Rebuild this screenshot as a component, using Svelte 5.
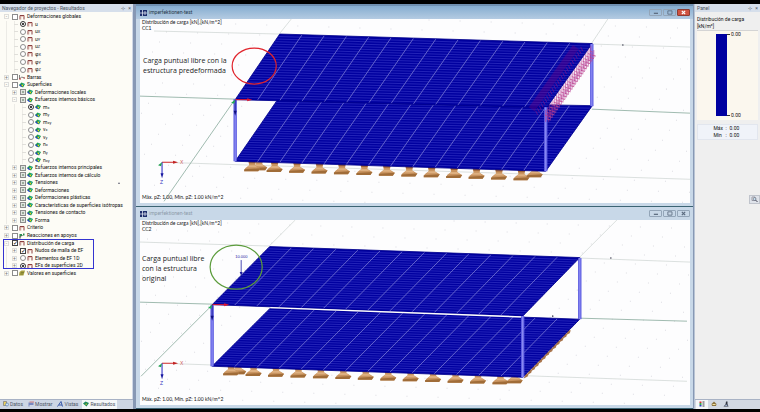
<script lang="ts">
  type Point = [number, number];
  type Quad = [Point, Point, Point, Point];

  interface Row {
    level: number;
    text: string;
    sub?: string;
    control: 'check' | 'mixed' | 'radio';
    icon: 'frame' | 'surface' | 'member' | 'support' | 'value';
    group?: string;
    on?: boolean;
    expander?: '+' | '-';
    flag?: boolean;
  }

  interface Scene {
    id: string;
    active: boolean;
    loadCase: string;
    top: Quad;
    bottom: Quad;
    step: Point;
    green: number[][];
    grey: number[][];
    columns: number[][];
    feet: number[][];
    marks: Point[];
    note: string[];
    noteAt: Point;
    ring: number[];
    ringColour: string;
  }

  const leaf = (level: number, group: string, icon: Row['icon'], text: string, sub = '', on = false): Row => ({
    level, group, icon, text, sub, on, control: 'radio',
  });
  const branch = (level: number, icon: Row['icon'], text: string, control: Row['control'] = 'check', expander: '+' | '-' = '+'): Row => ({
    level, icon, text, control, expander,
  });

  const rows: Row[] = [
    branch(0, 'frame', 'Deformaciones globales', 'check', '-'),
    leaf(1, 'global', 'frame', 'u', '', true),
    leaf(1, 'global', 'frame', 'u', 'X'),
    leaf(1, 'global', 'frame', 'u', 'Y'),
    leaf(1, 'global', 'frame', 'u', 'Z'),
    leaf(1, 'global', 'frame', 'φ', 'X'),
    leaf(1, 'global', 'frame', 'φ', 'Y'),
    leaf(1, 'global', 'frame', 'φ', 'Z'),
    branch(0, 'member', 'Barras'),
    branch(0, 'surface', 'Superficies', 'check', '-'),
    branch(1, 'surface', 'Deformaciones locales', 'mixed'),
    branch(1, 'surface', 'Esfuerzos internos básicos', 'mixed', '-'),
    leaf(2, 'forces', 'surface', 'm', 'x', true),
    leaf(2, 'forces', 'surface', 'm', 'y'),
    leaf(2, 'forces', 'surface', 'm', 'xy'),
    leaf(2, 'forces', 'surface', 'v', 'x'),
    leaf(2, 'forces', 'surface', 'v', 'y'),
    leaf(2, 'forces', 'surface', 'n', 'x'),
    leaf(2, 'forces', 'surface', 'n', 'y'),
    leaf(2, 'forces', 'surface', 'n', 'xy'),
    branch(1, 'surface', 'Esfuerzos internos principales', 'mixed'),
    branch(1, 'surface', 'Esfuerzos internos de cálculo', 'mixed'),
    { ...branch(1, 'surface', 'Tensiones', 'mixed'), flag: true },
    branch(1, 'surface', 'Deformaciones', 'mixed'),
    branch(1, 'surface', 'Deformaciones plásticas', 'mixed'),
    branch(1, 'surface', 'Características de superficies isótropas', 'mixed'),
    branch(1, 'surface', 'Tensiones de contacto', 'mixed'),
    branch(1, 'surface', 'Forma', 'mixed'),
    branch(0, 'frame', 'Criterio'),
    branch(0, 'support', 'Reacciones en apoyos'),
    { ...branch(0, 'frame', 'Distribución de carga', 'check', '-'), on: true },
    { ...branch(1, 'frame', 'Nudos de malla de EF'), on: true },
    { ...branch(1, 'frame', 'Elementos de EF 1D', 'radio'), group: 'load' },
    { ...branch(1, 'frame', 'EFs de superficies 2D', 'radio'), group: 'load', on: true },
    branch(0, 'value', 'Valores en superficies'),
  ];

  // evenly spaced supports under the front edge
  const supports = (x: number, y: number, count: number) =>
    Array.from({ length: count }, (_, i) => [x + i * 22.4, y + i * 0.75]);

  const scenes: Scene[] = [
    {
      id: 'cc1',
      active: true,
      loadCase: 'CC1',
      top: [[139.5, 15], [451.5, 24.5], [406, 88.5], [95, 80.5]],
      bottom: [[137, 81], [451.5, 86.5], [405, 152], [95, 142]],
      step: [7, -10],
      green: [[0, 77, 95, 80], [24, 182, 95, 80], [451, 90, 549, 94]],
      grey: [[14, 12, 139, 15], [139, 15, 151, 0], [451, 25, 549, 28], [451, 24, 467, 0], [22, 143, 549, 160]],
      columns: [[95, 80, 142], [405, 88, 152], [451, 25, 87]],
      feet: [[119, 143], ...supports(112, 144, 13), [394, 150]],
      marks: [[482, 26]],
      note: ['Carga puntual libre con la', 'estructura predeformada'],
      noteAt: [3, 44],
      ring: [114, 47, 22, 18],
      ringColour: '#e0242c',
    },
    {
      id: 'cc2',
      active: false,
      loadCase: 'CC2',
      top: [[129.5, 26.5], [439, 37.5], [382, 96], [72, 84.5]],
      bottom: [[130, 88], [439, 99], [382, 157], [72, 146]],
      step: [9, -9],
      green: [[0, 82, 72, 84], [1, 156, 72, 85], [439, 98, 546, 101]],
      grey: [[0, 22, 129, 26], [129, 26, 155, 0], [439, 38, 549, 42], [439, 37, 476, 0], [22, 143, 546, 161]],
      columns: [[72, 85, 146], [382, 96, 157], [439, 38, 99]],
      feet: [[98, 146], ...supports(91, 147, 13), [374, 155]],
      marks: [[470, 38], [412, 96]],
      note: ['Carga puntual libre', 'con la estructura', 'original'],
      noteAt: [2, 41],
      ring: [96, 47, 26, 22],
      ringColour: '#5c9c3c',
    },
  ];

  const mix = (a: Point, b: Point, t: number): Point => [a[0] + (b[0] - a[0]) * t, a[1] + (b[1] - a[1]) * t];

  // mesh lines running along the slab (long) or across it
  function mesh([a, b, c, d]: Quad, count: number, long: boolean) {
    let path = '';
    for (let i = 1; i < count; i++) {
      const t = i / count;
      const p = long ? mix(a, d, t) : mix(a, b, t);
      const q = long ? mix(b, c, t) : mix(d, c, t);
      path += `M${p[0].toFixed(1)} ${p[1].toFixed(1)}L${q[0].toFixed(1)} ${q[1].toFixed(1)}`;
    }
    return path;
  }

  function groundDots([dx, dy]: Point) {
    let path = '';
    for (let i = -8; i < 20; i++) {
      for (let j = -2; j < 22; j++) {
        const x = i * 31 + j * dx;
        const y = 186 + j * dy + i;
        if (x > 0 && x < 549 && y > 0 && y < 184) path += `M${x} ${y}h1`;
      }
    }
    return path;
  }

  const loads = Array.from({ length: 26 }, (_, i) => [451 - i * 1.8, 27 + i * 2.55]);
  const rim = Array.from({ length: 13 }, (_, i) => [427 - i * 3.5, 110 + i * 3.6]);

  const tabs = ['Datos', 'Mostrar', 'Vistas', 'Resultados'];
  let activeTab = $state('Resultados');
</script>

{#snippet glyph(name: string)}
  <svg class="glyph" viewBox="0 0 12 12" aria-hidden="true">
    {#if name === 'frame'}
      <path d="M2 11V3H10V11" fill="none" stroke="#8c4040" stroke-width="2" />
      <path d="M4 11V5H11" fill="none" stroke="#d8a090" />
    {:else if name === 'surface'}
      <path d="M0 6L5 1L12 4L8 11Z" fill="#1d9a4c" />
      <path d="M0 6L4 5L6 10L4 10Z" fill="#2444c4" />
      <path d="M4 6L8 5L8 9Z" fill="#f0d020" />
      <path d="M6 3L11 4L9 6Z" fill="#30b8c0" />
    {:else if name === 'member'}
      <path d="M1 2V10L5 6L11 8" fill="none" stroke="#555" stroke-width="1.5" />
      <path d="M0 10H4M9 8H12" stroke="#c04040" stroke-width="2" />
    {:else if name === 'support'}
      <path d="M2 11V6L7 5" fill="none" stroke="#333" stroke-width="2" />
      <path d="M1 2H6V6H1ZM8 1H11V5H8Z" fill="#2d8a4c" />
    {:else}
      <path d="M1 4L5 1H12L9 11H0Z" fill="#a8a040" />
      <path d="M3 8H8M4 5H10" stroke="#5c6428" />
    {/if}
  </svg>
{/snippet}

<div class="app">
  <div class="workspace">
    <aside class="navigator">
      <header class="panel-title">
        <span>Navegador de proyectos - Resultados</span>
        <button aria-label="Fijar">⊹</button>
        <button aria-label="Cerrar">×</button>
      </header>

      <div class="tree-area">
        <ul class="tree">
          {#each rows as row, i}
            <li class="row">
              {#each { length: row.level } as _}
                <span class="guide"></span>
              {/each}
              {#if row.expander}
                <button class="expander" aria-label="Expandir {row.text}"><span>{row.expander}</span></button>
              {:else}
                <span class="guide branch"></span>
              {/if}
              <input
                id="row-{i}"
                type={row.control === 'radio' ? 'radio' : 'checkbox'}
                name={row.group}
                class:mixed={row.control === 'mixed'}
                checked={row.on}
              />
              <label for="row-{i}">
                {@render glyph(row.icon)}
                <span>{row.text}{#if row.sub}<small>{row.sub}</small>{/if}</span>
              </label>
              {#if row.flag}
                <svg class="flag" viewBox="0 0 4 4" aria-hidden="true"><path d="M1 3H3L2 1Z" fill="#667" /></svg>
              {/if}
            </li>
          {/each}
          <li class="highlight" aria-hidden="true"></li>
        </ul>
      </div>

      <nav class="tabs">
        {#each tabs as tab, i}
          <button class:active={activeTab === tab} onclick={() => activeTab = tab}>
            <svg class="glyph" viewBox="0 0 12 12" aria-hidden="true">
              {#if i === 0}
                <path d="M1 1H7V9H1Z" fill="#e8d060" stroke="#556" />
                <circle cx="8" cy="7" r="3" fill="#cfe4f8" stroke="#3560a0" />
              {:else if i === 1}
                <path d="M1 3H11V8H3V11H1Z" fill="#7888c0" />
                <path d="M3 2H12" stroke="#d08080" stroke-width="2" />
              {:else if i === 2}
                <path d="M1 11L8 1L11 11M4 8H10" fill="none" stroke="#3858a8" stroke-width="2" />
              {:else}
                <path d="M0 5L5 1L12 4L7 11Z" fill="#1d8a5c" />
                <path d="M4 6L8 5L7 8Z" fill="#f0d020" />
              {/if}
            </svg>
            {tab}
          </button>
        {/each}
      </nav>
    </aside>

    <main class="mdi">
      {#each scenes as scene (scene.id)}
        <section class="window" class:active={scene.active}>
          <header class="window-title">
            <svg class="app-icon" viewBox="0 0 14 12" aria-hidden="true">
              <path d="M0 0H14V12H0Z" fill="#1d2e6c" />
              <path d="M0 6H14M5 0V12M10 2V10" stroke="#e8eef8" stroke-width="1.5" />
            </svg>
            <h2>imperfektionen-test</h2>
            <button aria-label="Minimizar">
              <svg viewBox="0 0 12 6"><path d="M4 4H9" stroke="currentColor" stroke-width="1.5" /></svg>
            </button>
            <button aria-label="Maximizar">
              <svg viewBox="0 0 12 6"><path d="M4 1H9V5H4Z" fill="none" stroke="currentColor" /></svg>
            </button>
            <button class="close" aria-label="Cerrar ventana">
              <svg viewBox="0 0 12 6"><path d="M4 1L8 5M8 1L4 5" stroke="currentColor" stroke-width="1.5" /></svg>
            </button>
          </header>

          <div class="canvas">
            <svg class="scene" viewBox="0 0 549 184" preserveAspectRatio="xMinYMin meet">
              <path d={groundDots(scene.step)} stroke="#dcdce2" />
              {#each scene.grey as [x1, y1, x2, y2]}
                <line {x1} {y1} {x2} {y2} stroke="#c4ccca" stroke-width="0.6" />
              {/each}
              {#each scene.green as [x1, y1, x2, y2]}
                <line {x1} {y1} {x2} {y2} stroke="#88aa9c" stroke-width="0.8" />
              {/each}

              {#each scene.feet as [x, y]}
                <g transform="translate({x} {y})">
                  <path d="M-4 -3H4L3 2L8 5L6 8H-8L-7 5L-3 2Z" fill="#c99460" />
                  <path d="M-4 -3H4L3 0H-3Z" fill="#9a6038" />
                  <path d="M-8 6L8 5L6 8H-8Z" fill="#a06c38" />
                  <path d="M-3 2L3 2L5 4H-5Z" fill="#deb080" />
                </g>
              {/each}

              {#if !scene.active}
                {#each rim as [x, y]}
                  <path d="M{x} {y}l3 0l-1 3l-4 2z" fill="#a8744c" />
                {/each}
              {/if}

              {#each [scene.bottom, scene.top] as quad}
                <polygon points={quad.join(' ')} fill="#0000a0" />
                <path d={mesh(quad, 26, true)} stroke="#2c2cbe" stroke-width="0.8" />
                <path d={mesh(quad, 14, false)} stroke="#7878d4" stroke-width="0.8" />
                <polygon points={quad.join(' ')} fill="none" stroke="#00008c" stroke-width="0.8" />
              {/each}
              {#if !scene.active}
                <path d="M130 87.5L382 96.8" stroke="#fff" stroke-width="1.4" />
              {/if}

              {#each scene.columns as [x, y1, y2]}
                <line x1={x} x2={x} {y1} {y2} stroke="#5c5ce0" stroke-width="3.4" />
                <line x1={x} x2={x} {y1} {y2} stroke="#8c8cf4" stroke-width="1.2" />
              {/each}

              {#if scene.active}
                <path d="M435 28L391 90" stroke="#7c007c" stroke-width="7" opacity="0.35" />
                {#each loads as [x, y]}
                  <path d="M{x - 1} {y}v12M{x + 2} {y + 4}v8" stroke="#b03090" stroke-width="0.6" />
                  <path d="M{x - 2} {y + 5}l3 1M{x} {y + 9}l4 1" stroke="#c04890" stroke-width="0.8" />
                  <path d="M{x - 11} {y + 1}l2 4" stroke="#6c1090" stroke-width="0.8" />
                {/each}
              {:else}
                <text class="load" x="95" y="38">10.000</text>
                <path d="M101 40V53" stroke="#2020a0" stroke-width="0.8" />
                <path d="M99.5 52H102.5L101 56Z" fill="#2020a0" />
              {/if}

              <g transform="translate({scene.top[3][0]} {scene.top[3][1]})">
                <path d="M0 0H14" stroke="#e01830" />
                <path d="M12 -1.5L17 0L12 1.5Z" fill="#e01830" />
                <path d="M0 0V12" stroke="#1818a0" />
                <path d="M-1.5 11H1.5L0 16Z" fill="#101080" />
                <path d="M-4 3L0 0L-1 4Z" fill="#20b050" />
              </g>
              <g transform="translate(22 143)">
                <path d="M0 0H12" stroke="#d83030" />
                <path d="M11 -1.5L16 0L11 1.5Z" fill="#c02020" />
                <path d="M0 0V12" stroke="#2020c0" />
                <path d="M-1.5 11H1.5L0 16Z" fill="#1818a0" />
                <path d="M-4 3L0 0L-1 4Z" fill="#20a050" />
                <text class="axis-x" x="18" y="2">X</text>
                <text class="axis-z" x="-2" y="22">Z</text>
              </g>
              {#each scene.marks as [cx, cy]}
                <circle {cx} {cy} r="0.8" fill="#445" />
              {/each}

              <ellipse
                cx={scene.ring[0]}
                cy={scene.ring[1]}
                rx={scene.ring[2]}
                ry={scene.ring[3]}
                fill="none"
                stroke={scene.ringColour}
                stroke-width="1.2"
              />
              <text class="note">
                {#each scene.note as line, i}
                  <tspan x={scene.noteAt[0]} y={scene.noteAt[1] + i * 10}>{line}</tspan>
                {/each}
              </text>
            </svg>
            <p class="caption">Distribución de carga [kN],[kN/m^2]<br />{scene.loadCase}</p>
            <p class="extremes">Máx. pZ: 1.00, Mín. pZ: 1.00 kN/m^2</p>
          </div>
        </section>
      {/each}
    </main>

    <aside class="legend">
      <header class="panel-title">
        <span>Panel</span>
        <button aria-label="Fijar panel">⊹</button>
        <button aria-label="Cerrar panel">×</button>
      </header>
      <p class="legend-name">Distribución de carga<br />[kN/m²]</p>
      <div class="scale">
        <div class="bar"></div>
        <div class="ticks"><span>0.00</span><span>0.00</span></div>
      </div>
      <dl class="limits">
        <dt>Máx</dt><dd>:</dd><dd>0.00</dd>
        <dt>Mín</dt><dd>:</dd><dd>0.00</dd>
      </dl>
      <div class="spacer">
        <button class="zoom" aria-label="Ampliar">
          <svg viewBox="0 0 16 14">
            <path d="M3 2H9V9H3Z" fill="#fff" stroke="#556" />
            <circle cx="8" cy="6" r="3" fill="#c8e0f0" stroke="#445" />
            <path d="M10 8L14 12" stroke="#445" stroke-width="2" />
          </svg>
        </button>
      </div>
      <footer class="legend-tabs">
        <button class="active" aria-label="Escala de colores">
          <svg viewBox="0 0 12 12">
            <path d="M1 1H5V4H1Z" fill="#d83030" /><path d="M1 4H5V8H1Z" fill="#30a850" /><path d="M1 8H5V11H1Z" fill="#3040c0" />
            <path d="M7 2H11M7 6H11M7 10H11" stroke="#444" stroke-width="2" />
          </svg>
        </button>
        <button aria-label="Factores">
          <svg viewBox="0 0 12 12"><path d="M1 6L6 1L11 6L10 10H2Z" fill="#8c7440" /><path d="M3 6H9V8H3Z" fill="#f0e0a0" /></svg>
        </button>
        <button aria-label="Filtro">
          <svg viewBox="0 0 12 12"><path d="M6 1H9V6L11 11H1L5 7Z" fill="#303440" /><path d="M5 8L8 7L9 10H4Z" fill="#a0b0d0" /></svg>
        </button>
      </footer>
    </aside>
  </div>
</div>

<style>
  :global(body) {
    margin: 0;
    background: #000;
  }

  .app {
    box-sizing: border-box;
    min-height: 100vh;
    padding: 4px 0;
    display: flex;
    background: #000;
    color: #111;
    font: 5px/7px Roboto, 'Noto Sans', sans-serif;
  }

  .workspace {
    flex: 1;
    display: grid;
    grid-template-columns: 136px minmax(0, 1fr) 67px;
    background: #8798b4;
  }

  button {
    margin: 0;
    padding: 0;
    border: 0;
    background: none;
    color: inherit;
    font: inherit;
  }

  p,
  h2,
  ul,
  dl,
  dd {
    margin: 0;
    padding: 0;
  }

  .glyph {
    flex: none;
    width: 6px;
    height: 6px;
  }

  .panel-title {
    display: flex;
    align-items: center;
    gap: 3px;
    height: 8px;
    padding: 0 2px;
    background: #d6dfeb;
    color: #4c5460;
  }

  .panel-title span {
    flex: 1;
    white-space: nowrap;
  }

  .navigator {
    display: flex;
    flex-direction: column;
    margin-right: 3px;
    background: #d0d8e6;
  }

  .tree-area {
    flex: 1;
    margin-right: 1px;
    padding: 1px 0;
    background: #fdfcf6;
  }

  .tree {
    position: relative;
    display: grid;
    grid-template-rows: repeat(35, 1fr);
    min-height: 264px;
    list-style: none;
  }

  .row {
    display: flex;
    align-items: center;
    min-height: 0;
    padding-left: 3px;
    white-space: nowrap;
  }

  .guide,
  .expander {
    flex: none;
    position: relative;
    align-self: stretch;
    width: 8px;
  }

  .guide::before {
    content: '';
    position: absolute;
    top: 0;
    bottom: 0;
    left: 3px;
    border-left: 1px solid #ecebe6;
  }

  .branch::after {
    content: '';
    position: absolute;
    top: 3px;
    left: 3px;
    width: 4px;
    border-top: 1px solid #e0dfda;
  }

  .expander {
    display: flex;
    align-items: center;
  }

  .expander span {
    box-sizing: border-box;
    width: 5px;
    height: 5px;
    margin-left: 1px;
    border: 1px solid #dededc;
    color: #777;
    font-size: 5px;
    line-height: 3px;
    text-align: center;
  }

  input {
    appearance: none;
    flex: none;
    display: grid;
    place-items: center;
    box-sizing: border-box;
    width: 6px;
    height: 6px;
    margin: 0 1px;
    border: 1px solid #8c8c8c;
    background: #fff;
  }

  input[type='radio'] {
    border-radius: 50%;
  }

  input[type='radio']:checked::after {
    content: '';
    width: 2px;
    height: 2px;
    border-radius: 50%;
    background: #000;
  }

  input[type='radio']:checked {
    border-color: #333;
  }

  input[type='checkbox']:checked {
    border-color: #444;
  }

  input[type='checkbox']:checked::after {
    content: '✓';
    color: #000;
    font: bold 6px/4px 'DejaVu Sans', sans-serif;
  }

  .mixed {
    background: #9cac9c;
    box-shadow: inset 0 0 0 1px #dfe4df;
  }

  label {
    display: flex;
    align-items: center;
    gap: 2px;
  }

  small {
    font-size: 4px;
  }

  .flag {
    width: 4px;
    height: 4px;
    margin-left: auto;
    margin-right: 11px;
  }

  .highlight {
    position: absolute;
    grid-row: 31 / 35;
    top: 0;
    bottom: 0;
    left: 3px;
    width: 89px;
    border: 1px solid #3434d0;
    pointer-events: none;
  }

  .tabs {
    display: flex;
    gap: 2px;
    height: 9px;
    padding-left: 2px;
    border-top: 1px solid #a8b2c4;
    background: #cdd5e3;
    color: #4c5464;
  }

  .tabs button {
    display: flex;
    align-items: center;
    gap: 1px;
    padding: 0 2px 0 1px;
  }

  .tabs .active {
    background: #f4f6f8;
  }

  .mdi {
    display: flex;
    flex-direction: column;
    padding-top: 2px;
    background: #6f8fb0;
  }

  .window {
    flex: 1;
    display: flex;
    flex-direction: column;
    padding: 0 3px 3px 4px;
    border-bottom: 1px solid #3c6474;
    background: #c8d8e8;
  }

  .window-title {
    display: flex;
    align-items: center;
    gap: 1px;
    height: 13px;
    color: #8c9aa8;
  }

  .active .window-title {
    margin: 0 -3px 0 -4px;
    padding: 0 3px 0 4px;
    background: linear-gradient(#86add0, #b4cbe2);
    color: #283848;
  }

  .app-icon {
    width: 7px;
    height: 6px;
  }

  .window-title h2 {
    flex: 1;
    padding-left: 1px;
    font-size: 5px;
    font-weight: 400;
  }

  .window-title button {
    display: flex;
    align-items: center;
    width: 13px;
    height: 7px;
    box-sizing: border-box;
    border: 1px solid #93a5b8;
    border-radius: 1px;
    color: #5c6c80;
  }

  .window-title button svg {
    width: 100%;
    height: 5px;
  }

  .active .window-title .close {
    border-color: #8c3c34;
    background: #cf5240;
    color: #fff;
  }

  .canvas {
    flex: 1;
    position: relative;
    background: #fdfdfe;
  }

  .scene {
    display: block;
    width: 100%;
  }

  .note {
    fill: #222;
    font: 7px 'Open Sans', sans-serif;
  }

  .load {
    fill: #2020a0;
    font: 4px 'Liberation Sans', sans-serif;
  }

  .axis-x,
  .axis-z {
    fill: #d06060;
    font: 5px 'Liberation Sans', sans-serif;
  }

  .axis-z {
    fill: #3838c0;
  }

  .caption,
  .extremes {
    position: absolute;
    left: 2px;
    top: 0;
    font: 5px/6px Lato, sans-serif;
  }

  .extremes {
    top: auto;
    bottom: 3px;
  }

  .legend {
    display: flex;
    flex-direction: column;
    margin-left: 1px;
    border-left: 1px solid #b8c4d4;
    background: #efefef;
  }

  .legend-name {
    padding: 4px 2px 0;
    white-space: nowrap;
  }

  .scale {
    display: flex;
    height: 82px;
    margin: 0 2px;
    padding: 3px 0 4px 19px;
    border-top: 1px solid #d4d4d4;
    background: #fbf7ee;
  }

  .bar {
    width: 11px;
    background: #0000a0;
  }

  .ticks {
    display: flex;
    flex-direction: column;
    justify-content: space-between;
    margin: -3px 0;
  }

  .ticks span::before {
    content: '';
    display: inline-block;
    width: 3px;
    margin-right: 1px;
    border-top: 1px solid #333;
    vertical-align: middle;
  }

  .limits {
    display: grid;
    grid-template-columns: 12px 4px 12px;
    justify-content: center;
    margin: 4px 2px 0;
    border: 1px solid #e2e6ee;
    background: #f0f3f9;
  }

  .spacer {
    flex: 1;
    padding-top: 55px;
    text-align: right;
  }

  .zoom {
    width: 11px;
    height: 9px;
    border: 1px solid #c0c4cc;
    background: #dfe3ea;
  }

  .zoom svg {
    display: block;
    width: 9px;
    height: 7px;
  }

  .legend-tabs {
    display: flex;
    height: 9px;
    padding-left: 1px;
    border-top: 1px solid #a8b2c4;
    background: #d2d8e2;
  }

  .legend-tabs button {
    display: grid;
    place-items: center;
    width: 12px;
  }

  .legend-tabs .active {
    background: #f4f6f8;
  }

  .legend-tabs svg {
    width: 6px;
    height: 6px;
  }
</style>
